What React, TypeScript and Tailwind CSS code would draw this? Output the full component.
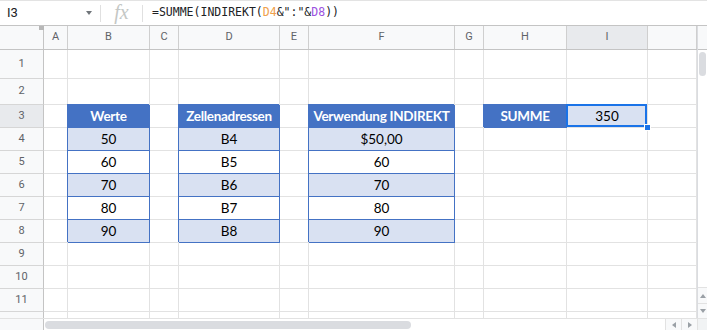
import { ReactNode } from "react";

type Kind = "plain" | "head" | "odd" | "even" | "sel";

type CellData = {
  text?: string;
  kind: Kind;
};

const COLS = ["A", "B", "C", "D", "E", "F", "G", "H", "I", "J"];

const GRID_COLS =
  "grid grid-cols-[44px_24px_82px_29px_101px_29px_146px_29px_83px_81px_49px]";

const TABLE: Record<string, CellData> = {
  B3: { text: "Werte", kind: "head" },
  D3: { text: "Zellenadressen", kind: "head" },
  F3: { text: "Verwendung INDIREKT", kind: "head" },
  H3: { text: "SUMME", kind: "head" },
  I3: { text: "350", kind: "sel" },
  B4: { text: "50", kind: "odd" },
  B5: { text: "60", kind: "even" },
  B6: { text: "70", kind: "odd" },
  B7: { text: "80", kind: "even" },
  B8: { text: "90", kind: "odd" },
  D4: { text: "B4", kind: "odd" },
  D5: { text: "B5", kind: "even" },
  D6: { text: "B6", kind: "odd" },
  D7: { text: "B7", kind: "even" },
  D8: { text: "B8", kind: "odd" },
  F4: { text: "$50,00", kind: "odd" },
  F5: { text: "60", kind: "even" },
  F6: { text: "70", kind: "odd" },
  F7: { text: "80", kind: "even" },
  F8: { text: "90", kind: "odd" },
};

const ROWS = [1, 2, 3, 4, 5, 6, 7, 8, 9, 10, 11, 12];

function FormulaBar() {
  return (
    <div className="flex items-center h-[26px] border-t border-b border-t-[#e3e3e3] border-b-[#c4c4c4] bg-white">
      <div className="flex items-center w-[100px] pl-[7px] pr-[8px] h-full">
        <span className="text-[13px] text-[#202124] font-['Roboto',sans-serif]">
          I3
        </span>
        <span className="ml-auto w-0 h-0 border-l-[3px] border-r-[3px] border-t-[4px] border-l-transparent border-r-transparent border-t-[#70757a]" />
      </div>
      <div className="w-px h-[17px] bg-[#e0e0e0]" />
      <div className="w-[41px] flex justify-center items-center h-full">
        <span className="text-[20px] italic text-[#c4c7c5] font-['Liberation_Serif',serif] leading-none -mt-[2px]">
          fx
        </span>
      </div>
      <div className="w-px h-[17px] bg-[#e0e0e0]" />
      <div className="pl-[9px] text-[11.5px] font-['DejaVu_Sans_Mono',monospace] text-[#202124]">
        =SUMME(INDIREKT(<span className="text-[#f0a04b]">D4</span>&amp;":"&amp;
        <span className="text-[#9b51e0]">D8</span>))
      </div>
    </div>
  );
}

function Cell({ row, col }: { row: number; col: string }) {
  const data = TABLE[`${col}${row}`];
  const base =
    "flex items-center justify-center border-r border-b whitespace-nowrap font-['Lato',sans-serif] text-[13.5px]";

  if (!data) {
    return <div className={`${base} border-[#e2e2e2] bg-white`} />;
  }

  if (data.kind === "sel") {
    return (
      <div className={`${base} relative border-[#e2e2e2] bg-[#d9e1f2] text-black`}>
        {data.text}
        <div className="absolute -left-px -top-px -right-0 -bottom-0 border-2 border-[#1a73e8] z-10" />
        <div className="absolute right-[-4px] bottom-[-4px] w-[7px] h-[7px] bg-[#1a73e8] border border-white z-20" />
      </div>
    );
  }

  const fill =
    data.kind === "head"
      ? "bg-[#4472c4] text-white font-bold tracking-[-0.3px]"
      : data.kind === "odd"
        ? "bg-[#d9e1f2] text-black"
        : "bg-white text-black";

  return (
    <div
      className={`${base} ${fill} border-[#4472c4] shadow-[-1px_-1px_0_#4472c4]`}
    >
      {data.text}
    </div>
  );
}

function HeaderRow() {
  return (
    <div className={`${GRID_COLS} h-[24px] border-b border-[#c4c4c4] bg-[#f8f9fa]`}>
      <div className="relative border-r border-[#c4c4c4]">
        <div className="absolute right-[-1px] top-0 w-[5px] h-[4px] bg-[#b7b7b7]" />
      </div>
      {COLS.map((c) => (
        <div
          key={c}
          className={`flex items-center justify-center border-r border-[#cfcfcf] text-[11px] text-[#5f6368] font-['Roboto',sans-serif] ${
            c === "I" ? "bg-[#e8eaed]" : ""
          }`}
        >
          {c === "J" ? "" : c}
        </div>
      ))}
    </div>
  );
}

function Body() {
  return (
    <div className="flex-1 overflow-hidden">
      <div
        className={`${GRID_COLS} grid-rows-[29px_26px_23px_23px_23px_23px_23px_23px_23px_23px_23px_23px]`}
      >
        {ROWS.map((r) => [
          <div
            key={`h${r}`}
            className={`flex items-center justify-center border-r border-b border-r-[#c4c4c4] border-b-[#d6d6d6] text-[11px] text-[#5f6368] font-['Roboto',sans-serif] ${
              r === 3 ? "bg-[#e8eaed]" : "bg-[#f8f9fa]"
            }`}
          >
            {r < 12 ? r : ""}
          </div>,
          ...COLS.map((c) => <Cell key={`${c}${r}`} row={r} col={c} />),
        ])}
      </div>
    </div>
  );
}

function Arrow({ dir }: { dir: "up" | "down" | "left" | "right" }): ReactNode {
  if (dir === "up")
    return (
      <span className="w-0 h-0 border-l-[3px] border-r-[3px] border-b-[4px] border-l-transparent border-r-transparent border-b-[#9aa0a6]" />
    );
  if (dir === "down")
    return (
      <span className="w-0 h-0 border-l-[3px] border-r-[3px] border-t-[4px] border-l-transparent border-r-transparent border-t-[#9aa0a6]" />
    );
  if (dir === "left")
    return (
      <span className="w-0 h-0 border-t-[3px] border-b-[3px] border-r-[4px] border-t-transparent border-b-transparent border-r-[#9aa0a6]" />
    );
  return (
    <span className="w-0 h-0 border-t-[3px] border-b-[3px] border-l-[4px] border-t-transparent border-b-transparent border-l-[#9aa0a6]" />
  );
}

function VScroll() {
  return (
    <div className="w-[10px] flex flex-col border-l border-[#dadce0]">
      <div className="h-[24px] bg-[#f8f9fa] border-b border-[#c4c4c4]" />
      <div className="flex-1 bg-white pl-px pt-[2px]">
        <div className="w-[7px] h-[24px] rounded-full bg-[#dadce0]" />
      </div>
      <div className="h-[16px] flex items-center justify-center border-t border-[#e2e2e2] bg-[#f8f9fa]">
        <Arrow dir="up" />
      </div>
      <div className="h-[15px] flex items-center justify-center border-t border-[#e2e2e2] bg-[#f8f9fa]">
        <Arrow dir="down" />
      </div>
    </div>
  );
}

function HScroll() {
  return (
    <div className="flex h-[12px] border-t border-[#e2e2e2]">
      <div className="w-[44px] bg-[#f8f9fa] border-r border-[#c4c4c4]" />
      <div className="flex-1 bg-white pl-px pt-[2px]">
        <div className="w-[366px] h-[8px] rounded-full bg-[#dadce0]" />
      </div>
      <div className="w-[16px] flex items-center justify-center border-l border-[#e2e2e2] bg-[#f8f9fa]">
        <Arrow dir="left" />
      </div>
      <div className="w-[16px] flex items-center justify-center border-l border-[#e2e2e2] bg-[#f8f9fa]">
        <Arrow dir="right" />
      </div>
      <div className="w-[10px] bg-[#f1f3f4] border-l border-[#e2e2e2]" />
    </div>
  );
}

export default function App() {
  return (
    <div className="w-[707px] h-[330px] flex flex-col bg-white overflow-hidden">
      <FormulaBar />
      <div className="flex flex-1 min-h-0">
        <div className="w-[697px] flex flex-col">
          <HeaderRow />
          <Body />
        </div>
        <VScroll />
      </div>
      <HScroll />
    </div>
  );
}
